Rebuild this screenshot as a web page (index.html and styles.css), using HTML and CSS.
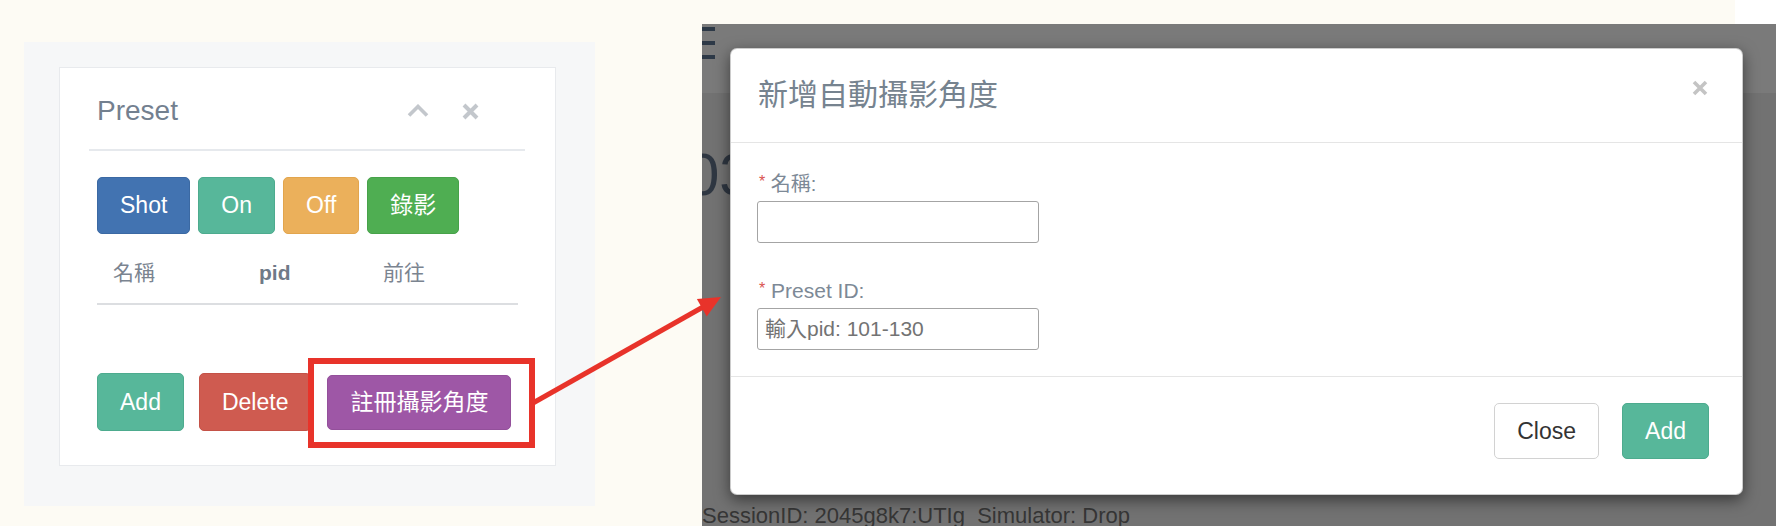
FILE: index.html
```html
<!DOCTYPE html>
<html lang="zh-Hant">
<head>
<meta charset="utf-8">
<title>Preset</title>
<link rel="stylesheet" href="styles.css">
</head>
<body>
<div class="stage">
  <section class="left-pane">
    <div class="x-panel">
      <div class="x-title">
        <h2 class="x-title-text">Preset</h2>
        <div class="x-tools">
          <svg class="icon-chevron" width="22" height="13" viewBox="0 0 22 13"><path d="M2 11.5 L11 2.5 L20 11.5" fill="none" stroke="#c3c7cc" stroke-width="3.6"/></svg>
          <svg class="icon-close" width="17" height="17" viewBox="0 0 17 17"><path d="M2 2 L15 15 M15 2 L2 15" fill="none" stroke="#c3c7cc" stroke-width="4"/></svg>
        </div>
      </div>
      <div class="btn-row">
        <button class="btn btn-blue">Shot</button>
        <button class="btn btn-teal">On</button>
        <button class="btn btn-orange">Off</button>
        <button class="btn btn-green">錄影</button>
      </div>
      <table class="preset-table">
        <thead>
          <tr><th class="col-name">名稱</th><th class="col-pid">pid</th><th class="col-go">前往</th></tr>
        </thead>
      </table>
      <div class="btn-row bottom-row">
        <button class="btn btn-teal">Add</button>
        <button class="btn btn-red">Delete</button>
        <div class="highlight">
          <button class="btn btn-purple">註冊攝影角度</button>
        </div>
      </div>
    </div>
  </section>

  <section class="screen">
    <div class="bg-nav">
      <div class="hamburger"><span></span><span></span><span></span></div>
    </div>
    <div class="bg-title">03</div>
    <div class="bg-session">SessionID: 2045g8k7:UTIg&nbsp; Simulator: Drop</div>

    <div class="modal">
      <div class="modal-header">
        <h3 class="modal-title">新增自動攝影角度</h3>
        <svg class="modal-close" width="16" height="16" viewBox="0 0 16 16"><path d="M2 2 L14 14 M14 2 L2 14" fill="none" stroke="#c4c4c4" stroke-width="3.6"/></svg>
      </div>
      <div class="modal-body">
        <label class="field-label"><span class="req">*</span> 名稱:</label>
        <input class="field-input" type="text">
        <label class="field-label second"><span class="req">*</span> Preset ID:</label>
        <input class="field-input" type="text" placeholder="輸入pid: 101-130">
      </div>
      <div class="modal-footer">
        <button class="btn btn-default">Close</button>
        <button class="btn btn-teal">Add</button>
      </div>
    </div>
  </section>
</div>

<svg class="arrow" width="1776" height="526" viewBox="0 0 1776 526">
  <line x1="533" y1="403" x2="703" y2="307" stroke="#e8332a" stroke-width="5"/>
  <polygon points="721,297 706.7,316.5 696.9,299.1" fill="#e8332a"/>
</svg>
</body>
</html>
```

FILE: styles.css
```css
* { box-sizing: border-box; }

html, body {
  margin: 0;
  padding: 0;
}

body {
  width: 1776px;
  height: 526px;
  overflow: hidden;
  position: relative;
  background: linear-gradient(to right, #fdfbf4 1735px, #ffffff 1735px);
  font-family: "Liberation Sans", "Noto Sans CJK TC", sans-serif;
}

.stage {
  display: flex;
  align-items: flex-start;
}

/* ---------- left panel ---------- */
.left-pane {
  margin-left: 24px;
  margin-top: 42px;
  width: 571px;
  height: 464px;
  background: #f6f7f8;
  padding: 25px 0 0 35px;
}

.x-panel {
  width: 497px;
  height: 399px;
  background: #fff;
  border: 1px solid #e8eaed;
  padding: 23px 30px 0 29px;
}

.x-title {
  display: flex;
  align-items: center;
  padding: 0 0 18px 8px;
  border-bottom: 2px solid #e6e9ed;
}

.x-title-text {
  margin: 0;
  font-size: 28px;
  line-height: 40px;
  font-weight: normal;
  color: #73808f;
}

.x-tools {
  margin-left: auto;
  margin-right: 46px;
  display: flex;
  align-items: center;
  gap: 33px;
}

.icon-chevron { display: block; margin-top: -2px; }
.icon-close { display: block; }

.btn-row {
  display: flex;
  align-items: center;
  gap: 8px;
  margin: 26px 0 0 8px;
}

.btn {
  font-family: "Liberation Sans", "Noto Sans CJK TC", sans-serif;
  font-size: 23px;
  height: 57px;
  padding: 0 22px;
  border: 1px solid transparent;
  border-radius: 5px;
  color: #fff;
  line-height: 1;
  cursor: pointer;
}

.btn-blue { background: #4273b1; border-color: #3b69a3; }
.btn-teal { background: #57b79a; border-color: #4dab8e; }
.btn-orange { background: #ebb05b; border-color: #e2a54d; }
.btn-green { background: #4fae52; border-color: #47a24a; }
.btn-red { background: #cf5b50; border-color: #c45247; }
.btn-purple { background: #9e57a6; border-color: #93509b; height: 55px; }
.btn-default { background: #fff; border-color: #d2d2d2; color: #333; }

.preset-table {
  width: 421px;
  margin-left: 8px;
  border-collapse: collapse;
}

.preset-table th {
  text-align: left;
  font-size: 21px;
  line-height: 30px;
  font-weight: bold;
  color: #6f7a88;
  padding: 24px 0 15px 16px;
  border-bottom: 2px solid #dcdee1;
}

.preset-table th.col-name { width: 146px; font-weight: normal; color: #7b8490; }
.preset-table th.col-pid { width: 124px; }
.preset-table th.col-go { font-weight: normal; color: #7b8490; }

.bottom-row {
  margin-top: 68px;
  gap: 15px;
  height: 58px;
}

.bottom-row > .btn { height: 58px; }

.highlight {
  position: relative;
  z-index: 1;
  margin-left: 1px;
  display: flex;
}

.highlight::before {
  content: "";
  position: absolute;
  left: -19px;
  right: -24px;
  top: -17px;
  bottom: -18px;
  border: 6px solid #e8332a;
  background: #fff;
  z-index: -1;
}

/* ---------- right screen ---------- */
.screen {
  position: relative;
  margin-left: 107px;
  margin-top: 24px;
  width: 1074px;
  height: 502px;
  background: #727272;
  overflow: hidden;
  display: flex;
  flex-direction: column;
}

.bg-nav {
  height: 69px;
  background: #7a7a7a;
  flex: none;
}

.hamburger {
  width: 13px;
  padding-top: 3px;
  display: flex;
  flex-direction: column;
  gap: 10px;
}

.hamburger span {
  display: block;
  height: 4px;
  background: #2d3947;
}

.bg-title {
  margin: 47px 0 0 -16px;
  font-size: 60px;
  line-height: 70px;
  color: #2f3742;
}

.bg-session {
  margin-top: auto;
  margin-bottom: -4px;
  font-size: 22px;
  line-height: 28px;
  color: #363636;
  white-space: nowrap;
}

.modal {
  position: absolute;
  left: 28px;
  top: 24px;
  width: 1013px;
  height: 447px;
  background: #fff;
  border: 1px solid rgba(0,0,0,.2);
  border-radius: 7px;
  box-shadow: 0 5px 15px rgba(0,0,0,.5);
  display: flex;
  flex-direction: column;
}

.modal-header {
  display: flex;
  align-items: flex-start;
  justify-content: space-between;
  padding: 23px 28px 25px 27px;
  border-bottom: 1px solid #e5e5e5;
}

.modal-title {
  margin: 0;
  font-size: 30px;
  line-height: 45px;
  font-weight: normal;
  color: #76838f;
}

.modal-close {
  display: block;
  margin-top: 8px;
  margin-right: 6px;
}

.modal-body {
  padding: 25px 26px 26px;
  display: flex;
  flex-direction: column;
  align-items: flex-start;
}

.field-label {
  font-size: 20px;
  line-height: 28px;
  color: #7d8996;
  padding-left: 2px;
}

.field-label.second {
  margin-top: 32px;
  font-size: 21px;
}

.req {
  color: #d9534f;
  font-size: 16px;
  vertical-align: 4px;
}

.field-input {
  margin-top: 3px;
  width: 282px;
  height: 42px;
  border: 1px solid #a4a4a4;
  border-radius: 3px;
  padding: 0 7px;
  font-family: "Liberation Sans", "Noto Sans CJK TC", sans-serif;
  font-size: 21px;
  color: #555;
  background: #fff;
}

.field-input::placeholder { color: #737373; }

.modal-footer {
  border-top: 1px solid #e5e5e5;
  display: flex;
  justify-content: flex-end;
  align-items: flex-start;
  gap: 23px;
  padding: 26px 33px 0 0;
  flex: 1;
}

.modal-footer .btn { height: 56px; }

/* ---------- annotation arrow ---------- */
.arrow {
  position: absolute;
  left: 0;
  top: 0;
  pointer-events: none;
  z-index: 5;
}
```
